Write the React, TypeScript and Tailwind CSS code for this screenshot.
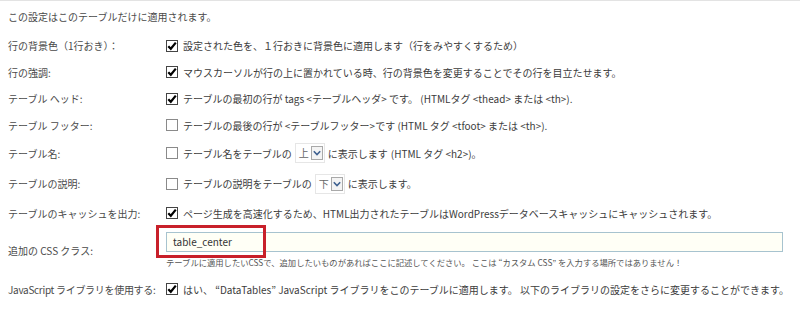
import React from "react";

const Check = ({ checked }: { checked: boolean }) => (
  <svg width="12" height="12" viewBox="0 0 12 12" className="shrink-0">
    <rect x="0.5" y="0.5" width="11" height="11" fill="#fff" stroke={checked ? "#444" : "#8a8a8a"} />
    {checked && <path d="M2.3 6.2 L4.8 8.8 L9.8 2.6" fill="none" stroke="#000" strokeWidth="2.2" />}
  </svg>
);

const Select = ({ v }: { v: string }) => (
  <span className="inline-flex items-center h-[20px] mx-[3px] border border-[#e6e6e6] bg-white pl-[3px] pr-[1px]">
    <span className="text-[#666] text-[10px] leading-none mr-[2px]">{v}</span>
    <span className="w-[12px] h-[14px] border border-[#a9a9a9] bg-[#f4f4f4] flex items-center justify-center">
      <svg width="8" height="6" viewBox="0 0 8 6">
        <path d="M0.8 1.2 L4 4.6 L7.2 1.2" fill="none" stroke="#3f6190" strokeWidth="1.6" />
      </svg>
    </span>
  </span>
);

const Row = ({ label, h, children, tight }: { label: string; h: string; children: React.ReactNode; tight?: boolean }) => (
  <div className={`flex items-center ${h}`}>
    <div className={`w-[158px] shrink-0 text-[#4a4a4a] whitespace-nowrap ${tight ? "tracking-[-0.3px]" : ""}`}>{label}</div>
    <div className="flex items-center">{children}</div>
  </div>
);

export default function App() {
  return (
    <div
      className="w-[800px] h-[310px] bg-white border-t border-[#e3e3e3] text-[10px] text-[#3c3c3c] overflow-hidden pl-[8px]"
      style={{ fontFamily: '"Noto Sans CJK JP", "Noto Sans", sans-serif' }}
    >
      <div className="h-[31px] flex items-center text-[#4a4a4a]">この設定はこのテーブルだけに適用されます。</div>
      <Row label="行の背景色（1行おき）：" h="h-[27px]">
        <Check checked />
        <span className="ml-[5px]">設定された色を、１行おきに背景色に適用します（行をみやすくするため）</span>
      </Row>
      <Row label="行の強調:" h="h-[26px]">
        <Check checked />
        <span className="ml-[5px]">マウスカーソルが行の上に置かれている時、行の背景色を変更することでその行を目立たせます。</span>
      </Row>
      <Row label="テーブル ヘッド:" h="h-[27px]">
        <Check checked />
        <span className="ml-[5px]">
          テーブルの最初の行が tags &lt;テーブルヘッダ&gt; です。 (HTMLタグ &lt;thead&gt; または &lt;th&gt;).
        </span>
      </Row>
      <Row label="テーブル フッター:" h="h-[26px]">
        <Check checked={false} />
        <span className="ml-[5px]">
          テーブルの最後の行が &lt;テーブルフッター&gt;です (HTML タグ &lt;tfoot&gt; または &lt;th&gt;).
        </span>
      </Row>
      <Row label="テーブル名:" h="h-[30px]">
        <Check checked={false} />
        <span className="ml-[5px] flex items-center">
          テーブル名をテーブルの<Select v="上" />に表示します <span className="ml-[3px]">(HTML タグ &lt;h2&gt;)</span>。
        </span>
      </Row>
      <Row label="テーブルの説明:" h="h-[31px]">
        <Check checked={false} />
        <span className="ml-[5px] flex items-center">
          テーブルの説明をテーブルの<Select v="下" />に表示します。
        </span>
      </Row>
      <Row label="テーブルのキャッシュを出力:" h="h-[28px]">
        <Check checked />
        <span className="ml-[5px]">ページ生成を高速化するため、HTML出力されたテーブルはWordPressデータベースキャッシュにキャッシュされます。</span>
      </Row>
      <div className="flex items-center h-[46px]">
        <div className="w-[158px] shrink-0 text-[#4a4a4a]">追加の CSS クラス:</div>
        <div className="flex flex-col">
          <div className="relative w-[617px] h-[20px] border border-[#a7c3cf] bg-[#fffff6] flex items-center pl-[6px] text-[#333]">
            table_center
            <div className="absolute left-[-11px] top-[-8px] w-[110px] h-[33px] border-[3px] border-[#c8202a]" />
          </div>
          <div className="text-[8.3px] text-[#555] mt-[4px] leading-[13px]">
            テーブルに適用したいCSSで、追加したいものがあればここに記述してください。 ここは “カスタム CSS” を入力する場所ではありません！
          </div>
        </div>
      </div>
      <Row label="JavaScript ライブラリを使用する:" h="h-[32px]" tight>
        <Check checked />
        <span className="ml-[5px]">はい、 “DataTables” JavaScript ライブラリをこのテーブルに適用します。 以下のライブラリの設定をさらに変更することができます。</span>
      </Row>
    </div>
  );
}
